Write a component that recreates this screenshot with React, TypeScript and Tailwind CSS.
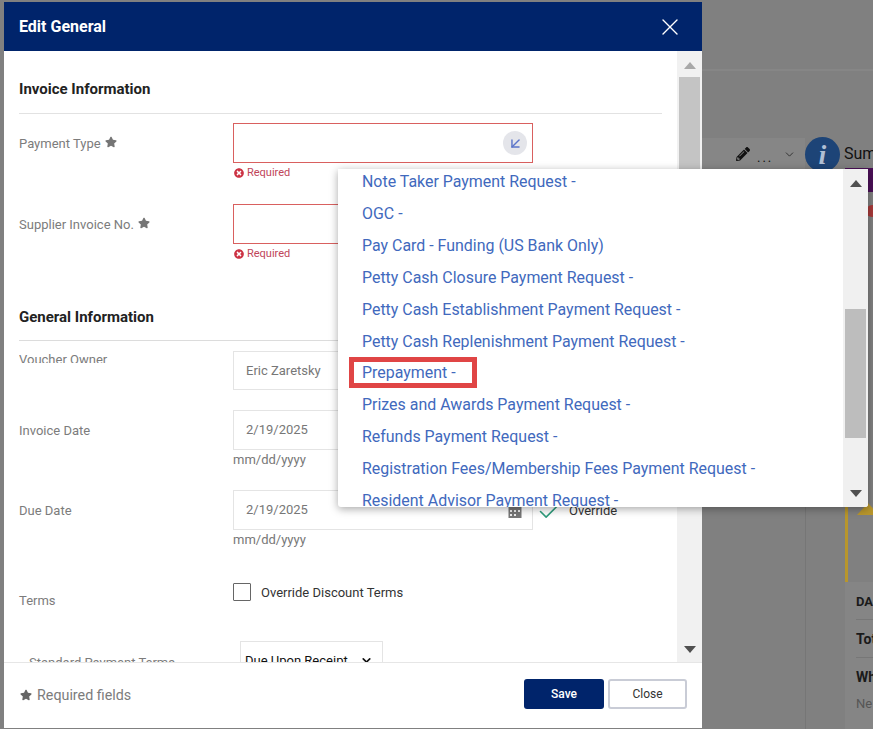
import { Check, X, ArrowDownLeft, ChevronDown } from "lucide-react";
import { FaPencilAlt, FaTimesCircle, FaStar } from "react-icons/fa";
import * as React from "react";

const options = [
  "Note Taker Payment Request -",
  "OGC -",
  "Pay Card - Funding (US Bank Only)",
  "Petty Cash Closure Payment Request -",
  "Petty Cash Establishment Payment Request -",
  "Petty Cash Replenishment Payment Request -",
  "Prepayment -",
  "Prizes and Awards Payment Request -",
  "Refunds Payment Request -",
  "Registration Fees/Membership Fees Payment Request -",
  "Resident Advisor Payment Request -",
];

function Req() {
  return <FaStar className="inline-block w-[12px] h-[12px] text-[#757575] ml-[4px] -mt-[6px]" />;
}

function Required() {
  return (
    <div className="flex items-center gap-[3px] h-[16px] mt-[2px] ml-[1px] text-[11px] text-[#c0455a]">
      <FaTimesCircle className="w-[10px] h-[10px] text-[#cc3344]" />
      Required
    </div>
  );
}

function CalendarIcon() {
  return (
    <svg width="14" height="11" viewBox="0 0 14 11" className="absolute right-[10px] bottom-[11px]">
      <rect x="0.5" y="0" width="13" height="11" fill="#777" />
      <rect x="2" y="3" width="2" height="2" fill="#eee" />
      <rect x="6" y="3" width="2" height="2" fill="#eee" />
      <rect x="10" y="3" width="2" height="2" fill="#eee" />
      <rect x="2" y="7" width="2" height="2" fill="#eee" />
      <rect x="6" y="7" width="2" height="2" fill="#eee" />
    </svg>
  );
}

function DateField({ label, top }: { label: string; top: string }) {
  return (
    <div className={`flex ${top}`}>
      <div className="w-[214px] pt-[11px] text-[13px] text-[#7c7c7c]">{label}</div>
      <div>
        <div className="relative w-[300px] h-[40px] border border-[#e4e4e4] pl-[12px] flex items-center text-[13px] text-[#777]">
          2/19/2025
          <CalendarIcon />
        </div>
        <div className="text-[13px] leading-[19px] text-[#777]">mm/dd/yyyy</div>
      </div>
    </div>
  );
}

function Arrow({ up, color }: { up?: boolean; color: string }) {
  return (
    <svg width="12" height="7" viewBox="0 0 12 7">
      <path d={up ? "M6 0 L12 7 L0 7 Z" : "M0 0 L12 0 L6 7 Z"} fill={color} />
    </svg>
  );
}

export default function App() {
  return (
    <div
      className="relative w-[873px] h-[729px] overflow-hidden bg-[#808080] pt-[2px] pl-[4px]"
      style={{ fontFamily: "Roboto, sans-serif" }}
    >
      {/* page behind the overlay */}
      <div className="absolute left-[702px] top-[69px] w-[171px] h-[2px] bg-[#868686]" />
      <div className="absolute left-[805px] top-[507px] w-px h-[222px] bg-[#767676]" />
      <div className="absolute left-[702px] top-[138px] w-[103px] h-[32px] bg-[#868686] flex items-center pl-[34px]">
        <FaPencilAlt className="w-[14px] h-[14px] text-[#111]" />
        <span className="ml-[7px] mt-[6px] text-[13px] text-[#111] leading-none tracking-[2px]">...</span>
        <ChevronDown className="ml-[10px] w-[13px] h-[13px] text-[#222]" strokeWidth={1.5} />
      </div>
      <div
        className="absolute left-[805px] top-[137px] w-[35px] h-[35px] rounded-full bg-[#1d4477] flex items-center justify-center text-[28px] font-bold italic leading-none text-[#b0bfd4]"
        style={{ fontFamily: "'Liberation Serif', serif" }}
      >
        i
      </div>
      <div className="absolute left-[844px] top-[142px] text-[16px] text-[#111]">Summary</div>
      <div className="absolute left-[845px] top-[168px] w-[28px] h-[24px] bg-[#4b0f57]" />
      <div className="absolute left-[866px] top-[205px] w-[12px] h-[12px] rounded-full bg-[#a83a3a]" />
      <div className="absolute left-[845px] top-[507px] w-[3px] h-[75px] bg-[#b8962c]" />
      <div className="absolute left-[857px] top-[503px] w-0 h-0 border-x-[11px] border-x-transparent border-b-[12px] border-b-[#b8962c]" />
      <div className="absolute left-[845px] top-[582px] w-[28px] h-[147px] bg-[#858585] pl-[11px] font-bold text-[13px] text-[#1a1a1a]">
        <div className="h-[38px] pt-[10px] border-b border-[#777]">DA</div>
        <div className="h-[38px] pt-[9px] border-b border-[#777] text-[14px]">Tot</div>
        <div className="h-[36px] pt-[9px] text-[14px]">Wh</div>
        <div className="font-normal text-[#555]">Ne</div>
      </div>

      {/* modal */}
      <div className="relative w-[698px] h-[726px] bg-white flex flex-col">
        <div className="h-[49px] shrink-0 bg-[#00246b] flex items-center justify-between pl-[15px] pr-[18px]">
          <h1 className="text-[16px] font-bold text-white">Edit General</h1>
          <X className="w-[28px] h-[28px] text-white" strokeWidth={1.2} />
        </div>

        <div className="flex-1 min-h-0 flex">
          <div className="flex-1 min-w-0 h-[611px] overflow-hidden pl-[15px] pr-[15px]">
            <div className="pt-[28px] pb-[14px] border-b border-[#e2e2e2] text-[15px] leading-[20px] font-bold text-[#222]">
              Invoice Information
            </div>

            <div className="flex mt-[9px]">
              <div className="w-[214px] pt-[11px] text-[13px] text-[#7c7c7c]">
                Payment Type
                <Req />
              </div>
              <div>
                <div className="relative w-[300px] h-[40px] border border-[#d9605f]">
                  <div className="absolute right-[5px] top-[7px] w-[24px] h-[24px] rounded-full bg-[#e4e5ea] flex items-center justify-center">
                    <ArrowDownLeft className="w-[17px] h-[17px] text-[#5b74c9]" strokeWidth={2} />
                  </div>
                </div>
                <Required />
              </div>
            </div>

            <div className="flex mt-[23px]">
              <div className="w-[214px] pt-[11px] text-[13px] text-[#7c7c7c]">
                Supplier Invoice No.
                <Req />
              </div>
              <div>
                <div className="w-[300px] h-[40px] border border-[#d9605f]" />
                <Required />
              </div>
            </div>

            <div className="mt-[45px] pb-[13px] border-b border-[#dcdcdc] text-[15px] leading-[20px] font-bold text-[#222]">
              General Information
            </div>

            <div className="flex mt-[10px]">
              <div className="w-[214px] h-[12px] overflow-hidden text-[13px] leading-[18px] text-[#7c7c7c]">
                Voucher Owner
              </div>
              <div className="w-[300px] h-[39px] border border-[#e4e4e4] pl-[12px] flex items-center text-[13px] text-[#777]">
                Eric Zaretsky
              </div>
            </div>

            <DateField label="Invoice Date" top="mt-[20px]" />
            <div className="relative mt-[21px]">
              <DateField label="Due Date" top="" />
              <Check
                className="absolute left-[517px] top-[8px] w-[27px] h-[27px] text-[#2f9c7c]"
                strokeWidth={1.4}
              />
              <span className="absolute left-[550px] top-[11px] text-[13px] text-[#333]">Override</span>
            </div>

            <div className="flex mt-[34px]">
              <div className="w-[214px] pt-[8px] text-[13px] text-[#7c7c7c]">Terms</div>
              <label className="flex items-center h-[18px]">
                <span className="w-[18px] h-[18px] border border-[#666] rounded-[1px]" />
                <span className="ml-[10px] mt-[1px] text-[13px] text-[#333]">Override Discount Terms</span>
              </label>
            </div>

            <div className="flex mt-[30px] pl-[10px]">
              <div className="w-[211px] pt-[12px] text-[13px] text-[#7c7c7c]">Standard Payment Terms</div>
              <div className="w-[143px] h-[40px] border border-[#e4e4e4] pl-[4px] flex items-center justify-between pr-[9px] text-[13px] text-[#111]">
                Due Upon Receipt
                <ChevronDown className="w-[13px] h-[13px] text-[#111]" strokeWidth={3} />
              </div>
            </div>
          </div>

          {/* modal scrollbar */}
          <div className="w-[25px] h-[611px] shrink-0 bg-[#f1f1f1] flex flex-col items-center">
            <div className="h-[26px] pt-[2px] w-full flex items-center justify-center shrink-0">
              <Arrow up color="#a8a8a8" />
            </div>
            <div className="w-[21px] h-[100px] shrink-0 bg-[#c4c4c4]" />
            <div className="flex-1" />
            <div className="h-[26px] flex items-center justify-center">
              <Arrow color="#505050" />
            </div>
          </div>
        </div>

        <div className="h-[66px] shrink-0 border-t border-[#e6e6e6] flex items-center justify-between pl-[16px] pr-[15px]">
          <div className="flex items-center text-[14.3px] text-[#7c7c7c]">
            <FaStar className="w-[12px] h-[12px] text-[#666] mr-[5px] -mt-[2px]" />
            Required fields
          </div>
          <div className="flex gap-[4px] -mt-[4px]">
            <button className="w-[80px] h-[30px] rounded-[3px] bg-[#00246b] text-white text-[12px] font-medium">
              Save
            </button>
            <button className="w-[79px] h-[30px] rounded-[3px] bg-white border-2 border-[#c9ccd6] text-[#333] text-[12px]">
              Close
            </button>
          </div>
        </div>
      </div>

      {/* dropdown list */}
      <div className="absolute left-[338px] top-[169px] w-[530px] h-[338px] bg-white shadow-[0_2px_8px_rgba(0,0,0,0.35)] rounded-b-[3px] flex overflow-hidden">
        <ul className="flex-1 min-w-0 -mt-[3px] pl-[24px] text-[15.95px] leading-[32px] text-[#4169bd]">
          {options.map((o) => (
            <li key={o} className="relative h-[31.91px] whitespace-nowrap">
              {o}
              {o === "Prepayment -" && (
                <span className="absolute -left-[13px] top-0 w-[128px] h-[31px] border-[5px] border-[#e04545]" />
              )}
            </li>
          ))}
        </ul>
        <div className="w-[25px] h-full shrink-0 bg-[#f0f0f0] flex flex-col items-center">
          <div className="h-[28px] flex items-center justify-center shrink-0">
            <Arrow up color="#505050" />
          </div>
          <div className="mt-[112px] w-[21px] h-[129px] shrink-0 bg-[#bdbdbd]" />
          <div className="flex-1" />
          <div className="h-[28px] flex items-center justify-center">
            <Arrow color="#505050" />
          </div>
        </div>
      </div>
    </div>
  );
}
